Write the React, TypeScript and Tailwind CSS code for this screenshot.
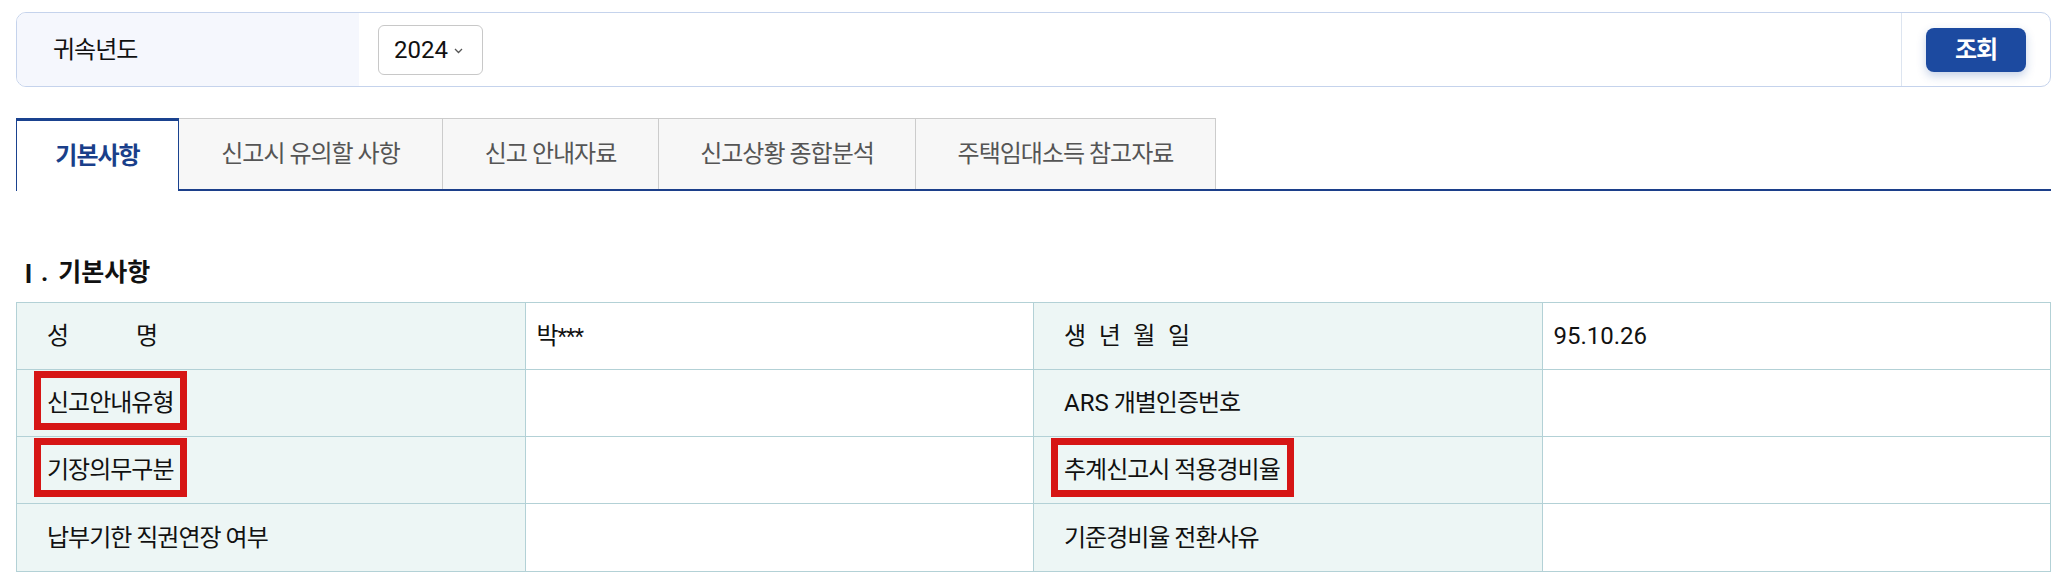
import React from 'react';

const tabs = ['기본사항', '신고시 유의할 사항', '신고 안내자료', '신고상황 종합분석', '주택임대소득 참고자료'];
const tabWidths = ['w-[163px]', 'w-[264px]', 'w-[216px]', 'w-[257px]', 'w-[300px]'];

const Marked = ({ children }: { children: React.ReactNode }) => (
    <span className="relative inline-block leading-[20px]">
        {children}
        {/* red annotation box drawn over the label */}
        <span className="absolute -left-[13px] -right-[14px] -top-[22px] -bottom-[17px] border-[7px] border-[#d61515]"></span>
    </span>
);

const Label = ({ children }: { children: React.ReactNode }) => (
    <td className="bg-[#edf6f5] border border-[#b3d1d6] pl-[30px] text-[#111]">{children}</td>
);

const Value = ({ children }: { children?: React.ReactNode }) => (
    <td className="bg-white border border-[#b3d1d6] pl-[11px] text-[#111]">{children}</td>
);

export default function App() {
    return (
        <div className="min-h-[586px] bg-white px-4 pt-3 font-['Roboto','Noto_Sans_CJK_KR',sans-serif] text-[24px] tracking-[-1px] text-[#111]">
            {/* Search panel */}
            <div className="flex h-[75px] rounded-[10px] border border-[#c5d3ec] overflow-hidden">
                <div className="flex w-[342px] items-center bg-[#f5f7fd] pl-[36px]">귀속년도</div>
                <div className="flex flex-1 items-center pl-[19px]">
                    <div className="flex h-[50px] w-[105px] items-center rounded-[6px] border border-[#c8c8c8] pl-[15px]">
                        <span className="text-[24px] tracking-normal">2024</span>
                        <svg className="ml-[6px] mt-[2px]" width="9" height="6" viewBox="0 0 9 6">
                            <path d="M1 1l3.5 3.5L8 1" fill="none" stroke="#555" strokeWidth="1.3" />
                        </svg>
                    </div>
                </div>
                <div className="flex items-center border-l border-[#dde5f0] px-6">
                    <button className="h-[44px] w-[100px] rounded-[8px] bg-[#1c4aa0] text-white font-semibold shadow-[0_4px_10px_rgba(28,74,160,0.25)]">
                        조회
                    </button>
                </div>
            </div>

            {/* Tabs */}
            <div className="mt-[31px] flex items-end border-b-2 border-[#1c3f8a]">
                {tabs.map((t, i) =>
                    i === 0 ? (
                        <div
                            key={t}
                            className={`${tabWidths[i]} relative z-10 -mb-[2px] flex h-[73px] items-center justify-center border-x border-t-[3px] border-[#1a428f] bg-white font-bold text-[#1a3f8a]`}
                        >
                            {t}
                        </div>
                    ) : (
                        <div
                            key={t}
                            className={`${tabWidths[i]} flex h-[71px] items-center justify-center border-r border-t border-[#cccccc] bg-[#f7f7f7] text-[#555]`}
                        >
                            {t}
                        </div>
                    )
                )}
            </div>

            {/* Section */}
            <h2 className="mt-[67px] flex h-[30px] items-center text-[25px] font-bold tracking-normal">
                <span className="font-['Noto_Sans_CJK_KR']">Ⅰ</span>
                <span className="mr-[10px]">.</span>
                기본사항
            </h2>

            <table className="mt-[14px] w-full table-fixed border-collapse border border-[#b3d1d6]">
                <colgroup>
                    <col className="w-[25%]" />
                    <col className="w-[25%]" />
                    <col className="w-[25%]" />
                    <col className="w-[25%]" />
                </colgroup>
                <tbody>
                    <tr className="h-[67px]">
                        <Label>
                            <span className="flex w-[110px] justify-between"><span>성</span><span>명</span></span>
                        </Label>
                        <Value>
                            박<span className="text-[22px]">***</span>
                        </Value>
                        <Label>
                            <span className="flex w-[125px] justify-between"><span>생</span><span>년</span><span>월</span><span>일</span></span>
                        </Label>
                        <Value>
                            <span className="text-[24px] tracking-normal">95.10.26</span>
                        </Value>
                    </tr>
                    <tr className="h-[67px]">
                        <Label><Marked>신고안내유형</Marked></Label>
                        <Value />
                        <Label><span className="tracking-normal">ARS</span> 개별인증번호</Label>
                        <Value />
                    </tr>
                    <tr className="h-[67px]">
                        <Label><Marked>기장의무구분</Marked></Label>
                        <Value />
                        <Label><Marked>추계신고시 적용경비율</Marked></Label>
                        <Value />
                    </tr>
                    <tr className="h-[68px]">
                        <Label>납부기한 직권연장 여부</Label>
                        <Value />
                        <Label>기준경비율 전환사유</Label>
                        <Value />
                    </tr>
                </tbody>
            </table>
        </div>
    );
}
